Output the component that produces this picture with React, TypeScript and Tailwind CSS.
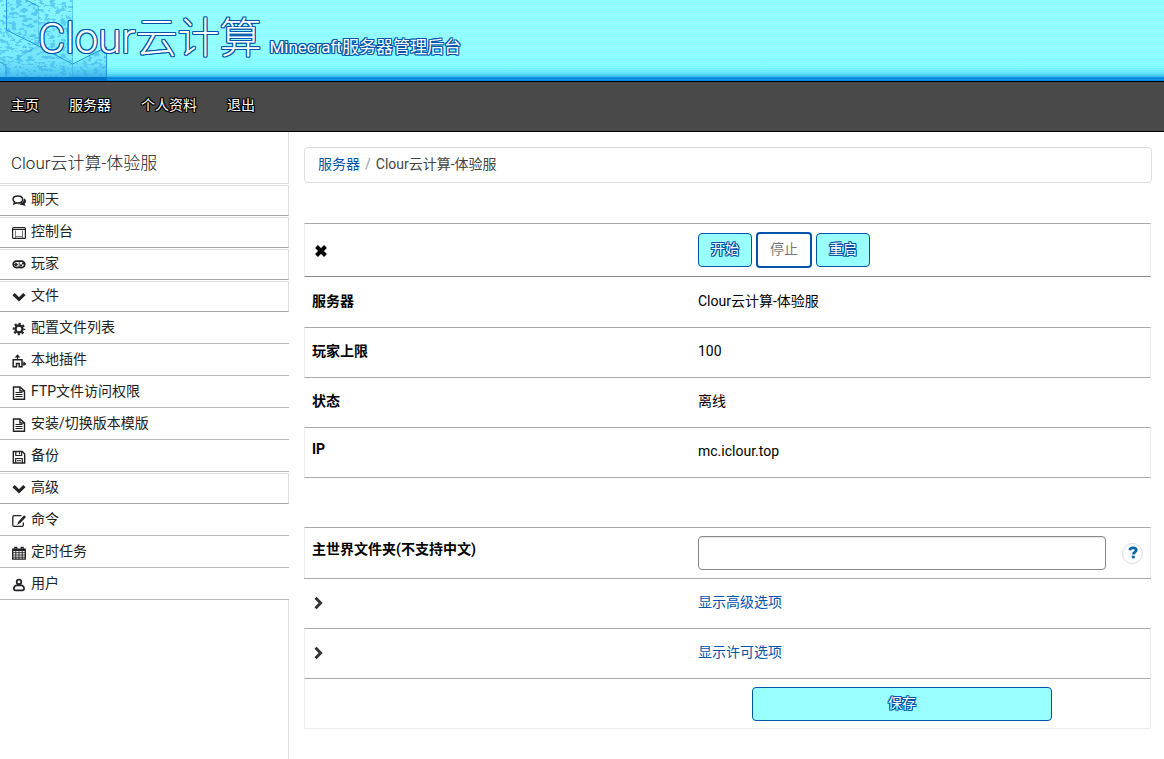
import React, { useState } from "react";

const blueOutline =
  "[text-shadow:-1px_-1px_0_#0055aa,0_-1px_0_#0055aa,1px_-1px_0_#0055aa,-1px_0_0_#0055aa,1px_0_0_#0055aa,-1px_1px_0_#0055aa,0_1px_0_#0055aa,1px_1px_0_#0055aa]";
const blackOutline =
  "[text-shadow:-1px_-1px_0_#000,0_-1px_0_#000,1px_-1px_0_#000,-1px_0_0_#000,1px_0_0_#000,-1px_1px_0_#000,0_1px_0_#000,1px_1px_0_#000]";

const icons: Record<string, React.ReactNode> = {
  chat: (
    <>
      <path d="M5.800 1.900c2.800 0 4.800 1.500 4.800 3.500S8.600 8.900 5.800 8.900c-.5 0-1-.1-1.400-.2L2 9.800l.6-1.900C1.600 7.300 1 6.400 1 5.400c0-2 2-3.500 4.800-3.500z" fill="none" stroke="currentColor" strokeWidth="1.500" />
      <path d="M11.900 4.300c1.300.7 2.100 1.700 2.100 3 0 1-.5 1.800-1.300 2.400l.7 2.400-2.800-1.200c-2 .3-3.700-.1-4.700-1.100 3.400.1 6.100-1.600 6-5.500z" fill="currentColor" />
    </>
  ),
  console: (
    <g fill="none" stroke="currentColor">
      <rect x="0.600" y="1.600" width="12.800" height="10.800" rx="1" strokeWidth="1.200" />
      <path d="M3.500 4.500v7.500M10.500 4.500v7.500M4 10.500h6" strokeWidth="0.600" />
      <path d="M1 3.500h12" strokeWidth="1" />
    </g>
  ),
  gamepad: (
    <>
      <path d="M3.800 3.100h6.400a3.300 3.300 0 1 1-1.900 6.300H5.700a3.300 3.300 0 1 1-1.900-6.300z" fill="none" stroke="currentColor" strokeWidth="1.700" />
      <path d="M4 4.700v3.600M2.200 6.500h3.600" stroke="currentColor" strokeWidth="1.500" />
      <circle cx="9" cy="7.400" r="1.100" fill="currentColor" />
      <circle cx="11" cy="5.600" r="1.100" fill="currentColor" />
      <path d="M7.200 3.500v5.500" stroke="currentColor" strokeWidth="0.800" />
    </>
  ),
  down: <path d="M1.600 4.200L7 9.300l5.400-5.100" fill="none" stroke="currentColor" strokeWidth="3.200" />,
  right: <path d="M3.500 1.700L8.600 7l-5.100 5.300" fill="none" stroke="currentColor" strokeWidth="3" />,
  gear: (
    <g fill="none" stroke="currentColor">
      <circle cx="7" cy="7" r="3.500" strokeWidth="2.300" />
      <circle cx="7" cy="7" r="5.300" strokeWidth="2" strokeDasharray="2.200 1.963" strokeDashoffset="1.100" />
    </g>
  ),
  plugin: (
    <>
      <path d="M1.200 12.700V5.800H10v6.900H7.200V9.600H4.500v3.100z" fill="none" stroke="currentColor" strokeWidth="1.500" />
      <path d="M5.500 6V2.200M10 9.800h3M4 3L5.500 1.200 7 3zM12 8.500l1.500 1.300L12 11z" fill="currentColor" stroke="currentColor" strokeWidth="1.200" />
    </>
  ),
  doc: (
    <g fill="none" stroke="currentColor">
      <path d="M1.500 1H8l4.500 4v8.300h-11z" strokeWidth="1.400" />
      <path d="M8 1v4h4.500" strokeWidth="1.400" />
      <path d="M3.500 6.500h7M3.500 8.500h7M3.500 10.500h7" strokeWidth="1" />
    </g>
  ),
  disk: (
    <g fill="none" stroke="currentColor" strokeWidth="1.400">
      <path d="M1.300 1.500h9L12.700 4v9H1.300z" />
      <path d="M3.800 1.500v4h5.900v-4M3.700 13V8.500h6.600V13" strokeWidth="1.200" />
      <path d="M7.500 2v2.500M5 10.700h4" strokeWidth="1" />
    </g>
  ),
  edit: (
    <>
      <path d="M9.500 1.700H2.200C1.300 1.700.8 2.300.8 3.100v8c0 .8.500 1.300 1.400 1.300H10c.8 0 1.300-.5 1.300-1.300V8.500" fill="none" stroke="currentColor" strokeWidth="1.300" />
      <path d="M12.100 1.300l1.900 1.700-5.600 6-3.400 2 1.500-3.600z" fill="currentColor" />
    </>
  ),
  calendar: (
    <g fill="none" stroke="currentColor">
      <path d="M.7 3.200h12.600v10H.7z" strokeWidth="1.300" />
      <path d="M1 6.700h12M1 9h12M1 11.200h12M3.800 5v8M7 5v8M10.200 5v8" strokeWidth="0.900" />
      <path d="M1 4h12" strokeWidth="2" />
      <path d="M2.800 4V1.300h2V4M9.200 4V1.300h2V4" strokeWidth="1.200" />
    </g>
  ),
  user: (
    <g fill="none" stroke="currentColor" strokeWidth="1.700">
      <circle cx="7" cy="3.900" r="2.300" />
      <path d="M4.300 7.300C2.600 8 1.900 9.200 1.900 10.800c0 1 .7 1.600 1.700 1.600h6.800c1 0 1.700-.6 1.700-1.600 0-1.600-.7-2.800-2.400-3.500z" />
    </g>
  ),
  cross: <path d="M2.500 2.500l9 9M11.500 2.500l-9 9" stroke="currentColor" strokeWidth="4" />,
};

const Icon = ({ name }: { name: string }) => (
  <svg viewBox="0 0 14 14" className="h-[14px] w-[14px] shrink-0" aria-hidden="true">
    {icons[name]}
  </svg>
);

const navItems = ["主页", "服务器", "个人资料", "退出"];

const menu = [
  { label: "聊天", icon: "chat", boxed: true },
  { label: "控制台", icon: "console", boxed: true },
  { label: "玩家", icon: "gamepad", boxed: true },
  { label: "文件", icon: "down", boxed: true },
  { label: "配置文件列表", icon: "gear", boxed: false },
  { label: "本地插件", icon: "plugin", boxed: false },
  { label: "FTP文件访问权限", icon: "doc", boxed: false },
  { label: "安装/切换版本模版", icon: "doc", boxed: false },
  { label: "备份", icon: "disk", boxed: false },
  { label: "高级", icon: "down", boxed: true },
  { label: "命令", icon: "edit", boxed: false },
  { label: "定时任务", icon: "calendar", boxed: false },
  { label: "用户", icon: "user", boxed: false },
];

const details = [
  { label: "服务器", value: "Clour云计算-体验服", height: "h-[51px]" },
  { label: "玩家上限", value: "100", height: "h-[50px]" },
  { label: "状态", value: "离线", height: "h-[50px]" },
  { label: "IP", value: "mc.iclour.top", height: "h-[51px]" },
];

// Isometric stone blocks behind the logo
const HeaderArt = () => (
  <svg viewBox="0 0 107 81" className="absolute top-0 left-0 h-[81px] w-[107px]" aria-hidden="true">
    <defs>
      <filter id="stone" x="0" y="0" width="100%" height="100%" colorInterpolationFilters="sRGB">
        <feTurbulence type="fractalNoise" baseFrequency="0.180 0.320" numOctaves="3" seed="4" />
        <feColorMatrix values="0 0 0 0 0.2  0 0 0 0 0.66  0 0 0 0 0.9  12 0 0 0 -6.2" />
      </filter>
      <linearGradient id="shade" x1="0" y1="0" x2="0" y2="1">
        <stop offset="0" stopColor="#84f4ff" />
        <stop offset="0.800" stopColor="#74e6fd" />
        <stop offset="1" stopColor="#3aaeea" />
      </linearGradient>
      <clipPath id="blocks">
        <path d="M0 0h73v64l34-17v30H0z" />
      </clipPath>
    </defs>
    <g clipPath="url(#blocks)">
      <rect width="107" height="77" fill="url(#shade)" opacity="0.800" />
      <path d="M6 0h20l12 6v40L6 30z" fill="#74e6fc" opacity="0.500" />
      <path d="M0 62l38-16 35 18v13H0z" fill="#66d8f8" opacity="0.300" />
      <rect width="107" height="77" filter="url(#stone)" opacity="0.500" />
    </g>
    <g fill="none" stroke="#2498e0">
      <path d="M6.500 0v30l32 16 34 18 34-17v30M26 0l12 6M0 62l6 3v12" />
      <path d="M38.500 6v40M72.500 0v77M38 46L6 65" opacity="0.400" />
    </g>
    <rect y="77" width="107" height="4" fill="#0077c8" />
  </svg>
);

const App = () => {
  const [world, setWorld] = useState("");

  return (
    <div className="flex min-h-screen flex-col bg-white font-[Roboto,'Noto_Sans_CJK_SC',sans-serif] text-sm leading-5 text-black">
      <header className="relative h-[81px] bg-[linear-gradient(#8cffff_0px,#8cffff_50px,#7dfcff_66px,#5ce4fb_73px,#2fb4ee_77px,#0088e0_77px)]">
        <div className="absolute inset-0 bg-[repeating-linear-gradient(transparent_0px_1px,rgba(255,255,255,0.100)_1px_2px)]"></div>
        <HeaderArt />
        <div className="relative flex items-baseline gap-2 pt-[13px] pl-[38px]">
          <h1 className={`text-[42px] leading-[52px] font-light text-white ${blueOutline}`}>Clour云计算</h1>
          <span className={`text-[17px] text-white ${blueOutline}`}>Minecraft服务器管理后台</span>
        </div>
      </header>

      <nav className="flex h-[51px] items-center gap-[30px] border-y border-black bg-[#494949] pb-1 pl-[11px]">
        {navItems.map((item) => (
          <a key={item} href="#" className={`text-white ${blackOutline}`}>
            {item}
          </a>
        ))}
      </nav>

      <div className="flex flex-1">
        <aside className="flex w-[289px] shrink-0 flex-col">
          <h2 className="flex h-[52px] items-center border-r border-b border-[#ddd] pt-[11px] pl-[11px] text-[17px] font-light text-[#222]">
            Clour云计算-体验服
          </h2>
          {menu.map((item) => (
            <a
              key={item.label}
              href="#"
              className={`flex items-center gap-[5px] pl-3 text-[#222] ${
                item.boxed
                  ? "mt-px h-[31px] border border-l-0 border-[#ddd] border-b-[#aaa] pb-[2px]"
                  : "h-[32px] border-b border-[#bbb]"
              }`}
            >
              <span className="pt-[2px]">
                <Icon name={item.icon} />
              </span>
              <span className={item.boxed ? "pb-[2px]" : "pb-px"}>{item.label}</span>
            </a>
          ))}
          <div className="flex-1 border-r border-[#ddd]"></div>
        </aside>

        <main className="min-w-0 flex-1 pt-[15px] pr-3 pb-[30px] pl-[15px]">
          <div className="flex h-[36px] items-center gap-[5px] rounded border border-[#ddd] px-[13px] pb-[2px]">
            <a href="#" className="text-[#0055aa]">服务器</a>
            <span className="text-[#999]">/</span>
            <span className="text-[#444]">Clour云计算-体验服</span>
          </div>

          <div className="mt-[40px] pr-px">
            <table className="w-full table-fixed border-separate border-spacing-0">
              <tbody>
                <tr className="h-[53px]">
                  <th scope="row" className="w-[386px] border-t border-l border-[#eee] border-t-[#aaa] pt-[2px] pl-[9px] text-left">
                    <Icon name="cross" />
                  </th>
                  <td className="border-t border-r border-[#eee] border-t-[#aaa] pl-2">
                    <div className="flex items-center gap-1">
                      <button className={`h-[34px] w-[54px] rounded border border-[#0055aa] bg-[#99ffff] pb-[2px] text-white ${blueOutline}`}>
                        开始
                      </button>
                      <button className="h-[36px] w-[56px] rounded border-2 border-[#0055aa] bg-white pb-[2px] text-[#777]">
                        停止
                      </button>
                      <button className={`h-[34px] w-[54px] rounded border border-[#0055aa] bg-[#99ffff] pb-[2px] text-white ${blueOutline}`}>
                        重启
                      </button>
                    </div>
                  </td>
                </tr>
                {details.map((row, i) => (
                  <tr key={row.label} className={row.height}>
                    <th
                      scope="row"
                      className={`border-t border-l pl-[7px] text-left font-bold ${i === 0 ? "border-t-[#888]" : "border-t-[#aaa]"} ${
                        i % 2 ? "border-l-[#eee]" : "border-l-white"
                      } ${i === 3 ? "border-b border-b-[#aaa] pb-[7px]" : "pb-[3px]"}`}
                    >
                      {row.label}
                    </th>
                    <td
                      className={`border-t border-r pb-[3px] pl-2 ${i === 0 ? "border-t-[#888]" : "border-t-[#aaa]"} ${
                        i % 2 ? "border-r-[#eee]" : "border-r-white"
                      } ${i === 3 ? "border-b border-b-[#aaa]" : ""}`}
                    >
                      {row.value}
                    </td>
                  </tr>
                ))}
              </tbody>
            </table>

            <form className="mt-[49px]" onSubmit={(e) => e.preventDefault()}>
              <div className="grid h-[51px] grid-cols-[385px_1fr] items-center border-x border-t border-[#eee] border-t-[#aaa]">
                <label htmlFor="world" className="pb-2 pl-[7px] font-bold">
                  主世界文件夹(不支持中文)
                </label>
                <div className="flex items-center gap-4 pr-[7px] pl-2">
                  <input
                    id="world"
                    type="text"
                    value={world}
                    onChange={(e) => setWorld(e.target.value)}
                    className="h-[34px] min-w-0 flex-1 rounded border border-[#888] bg-white px-3 shadow-[inset_0_1px_1px_rgba(0,0,0,0.1)]"
                  />
                  <button
                    type="button"
                    aria-label="帮助"
                    className="flex h-[21px] w-[21px] items-center justify-center rounded-full border border-[#ddd] text-[#0066aa]"
                  >
                    <svg viewBox="0 0 14 14" className="h-[14px] w-[14px]" aria-hidden="true">
                      <path d="M3.700 4.200C4 2.600 5.200 1.800 7 1.800c2 0 3.300.8 3.300 2.300 0 2-2.900 2-2.900 4.300" fill="none" stroke="currentColor" strokeWidth="2.700" />
                      <rect x="5.800" y="9.700" width="3" height="2.600" fill="currentColor" />
                    </svg>
                  </button>
                </div>
              </div>
              <div className="grid h-[50px] grid-cols-[386px_1fr] items-center border-t border-[#aaa] pb-[3px] text-[#333]">
                <span className="pt-px pl-2">
                  <Icon name="right" />
                </span>
                <a href="#" className="justify-self-start pl-2 text-[#0055aa]">显示高级选项</a>
              </div>
              <div className="grid h-[50px] grid-cols-[385px_1fr] items-center border-x border-t border-[#eee] border-t-[#aaa] pb-[3px] text-[#333]">
                <span className="pt-px pl-[7px]">
                  <Icon name="right" />
                </span>
                <a href="#" className="justify-self-start pl-2 text-[#0055aa]">显示许可选项</a>
              </div>
              <div className="grid h-[51px] grid-cols-[385px_1fr] items-center border border-[#eee] border-t-[#aaa]">
                <div className="col-start-2 flex justify-center pr-11 pl-2">
                  <button type="submit" className={`h-[34px] w-[300px] rounded border border-[#0055aa] bg-[#99ffff] pb-[2px] text-white ${blueOutline}`}>
                    保存
                  </button>
                </div>
              </div>
            </form>
          </div>
        </main>
      </div>
    </div>
  );
};

export default App;
